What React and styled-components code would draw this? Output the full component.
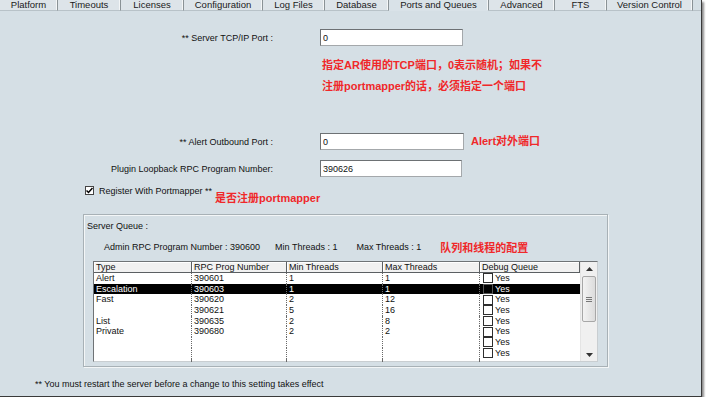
import React from "react";
import styled, { createGlobalStyle } from "styled-components";

const tabs = [
  { label: "Platform", width: 58 },
  { label: "Timeouts", width: 63 },
  { label: "Licenses", width: 63 },
  { label: "Configuration", width: 79 },
  { label: "Log Files", width: 62 },
  { label: "Database", width: 64 },
  { label: "Ports and Queues", width: 100, active: true },
  { label: "Advanced", width: 66 },
  { label: "FTS", width: 52 },
  { label: "Version Control", width: 86 },
];

const queues = [
  ["Alert", "390601", "1", "1"],
  ["Escalation", "390603", "1", "1"],
  ["Fast", "390620", "2", "12"],
  ["", "390621", "5", "16"],
  ["List", "390635", "2", "8"],
  ["Private", "390680", "2", "2"],
  null,
  null,
];

function App() {
  return (
    <>
      <GlobalStyle />
      <Frame>
        <TabBar>
          {tabs.map((t) => (
            <Tab key={t.label} $width={t.width} $active={t.active}>
              {t.label}
            </Tab>
          ))}
          <TabRest />
        </TabBar>

        <Form>
          <FieldRow $top={18}>
            <Label>** Server TCP/IP Port :</Label>
            <TextInput $width={143} defaultValue="0" />
          </FieldRow>
          <NoteBlock>
            <Note>指定AR使用的TCP端口，0表示随机；如果不</Note>
            <Note>注册portmapper的话，必须指定一个端口</Note>
          </NoteBlock>
          <FieldRow $top={36}>
            <Label>** Alert Outbound Port :</Label>
            <TextInput $width={144} defaultValue="0" />
            <Note $inline>Alert对外端口</Note>
          </FieldRow>
          <FieldRow $top={10}>
            <Label>Plugin Loopback RPC Program Number:</Label>
            <TextInput $width={142} defaultValue="390626" />
          </FieldRow>
          <CheckRow>
            <CheckBox $checked>
              <svg width="7" height="7" viewBox="0 0 7 7">
                <path d="M0.5 3.5 L2.5 5.5 L6.5 1" stroke="#000" strokeWidth="1.5" fill="none" />
              </svg>
            </CheckBox>
            <CheckLabel>Register With Portmapper **</CheckLabel>
            <Note $inline>是否注册portmapper</Note>
          </CheckRow>
        </Form>

        <GroupBox>
          <GroupTitle>Server Queue :</GroupTitle>
          <StatsRow>
            <Stat>Admin RPC Program Number : 390600</Stat>
            <Stat>Min Threads : 1</Stat>
            <Stat>Max Threads : 1</Stat>
            <Note $inline>队列和线程的配置</Note>
          </StatsRow>
          <List>
            <ListMain>
              <HeaderRow>
                <HeaderCell>Type</HeaderCell>
                <HeaderCell>RPC Prog Number</HeaderCell>
                <HeaderCell>Min Threads</HeaderCell>
                <HeaderCell>Max Threads</HeaderCell>
                <HeaderCell>Debug Queue</HeaderCell>
              </HeaderRow>
              <ListBody>
                {queues.map((q, i) => (
                  <Row key={i} $selected={i === 1}>
                    <Cell>{q ? q[0] : ""}</Cell>
                    <Cell>{q ? q[1] : ""}</Cell>
                    <Cell>{q ? q[2] : ""}</Cell>
                    <Cell>{q ? q[3] : ""}</Cell>
                    <Cell $last>
                      <SmallBox $selected={i === 1} />
                      Yes
                    </Cell>
                  </Row>
                ))}
                <Row $filler>
                  <Cell />
                  <Cell />
                  <Cell />
                  <Cell />
                  <Cell $last />
                </Row>
              </ListBody>
            </ListMain>
            <ScrollBar>
              <ScrollArrow>
                <svg width="7" height="4" viewBox="0 0 7 4">
                  <path d="M0 4 L3.5 0 L7 4 Z" fill="#333" />
                </svg>
              </ScrollArrow>
              <Thumb>
                <Grip />
                <Grip />
                <Grip />
              </Thumb>
              <ScrollTrack />
              <ScrollArrow>
                <svg width="7" height="4" viewBox="0 0 7 4">
                  <path d="M0 0 L3.5 4 L7 0 Z" fill="#333" />
                </svg>
              </ScrollArrow>
            </ScrollBar>
          </List>
        </GroupBox>

        <Footer>** You must restart the server before a change to this setting takes effect</Footer>
      </Frame>
    </>
  );
}

export default App;

const GlobalStyle = createGlobalStyle`
  html, body {
    margin: 0;
    padding: 0;
    background: #ffffff;
  }
  body {
    font-family: "Liberation Sans", Arial, sans-serif;
    font-size: 9px;
    color: #111;
  }
`;

const Frame = styled.div`
  width: 702px;
  height: 397px;
  box-sizing: border-box;
  background: #d5dfe5;
  border-right: 1px solid #3a3a3a;
  border-bottom: 1px solid #3a3a3a;
  box-shadow: 2px 2px 2px rgba(0, 0, 0, 0.45);
  display: flex;
  flex-direction: column;
  overflow: hidden;
`;

const TabBar = styled.div`
  display: flex;
  height: 11px;
  flex-shrink: 0;
`;

const Tab = styled.div`
  width: ${(p) => p.$width}px;
  box-sizing: border-box;
  text-align: center;
  line-height: 9px;
  font-size: 9.5px;
  background: ${(p) => (p.$active ? "#d9e2e8" : "#dde4e9")};
  border-right: 1px solid #8a9296;
  border-bottom: ${(p) => (p.$active ? "1px solid transparent" : "1px solid #b8c2c8")};
  box-shadow: inset -1px 0 0 #f4f6f7;
  color: #1a1a1a;
`;

const TabRest = styled.div`
  flex: 1;
  border-bottom: 1px solid #b8c2c8;
`;

const Form = styled.div`
  display: flex;
  flex-direction: column;
`;

const FieldRow = styled.div`
  display: grid;
  grid-template-columns: 273px auto auto;
  column-gap: 47px;
  align-items: center;
  justify-content: start;
  margin-top: ${(p) => p.$top}px;
  height: 17px;
  & > :nth-child(3) {
    margin-left: -40px;
  }
`;

const Label = styled.div`
  text-align: right;
  white-space: nowrap;
`;

const TextInput = styled.input`
  width: ${(p) => p.$width}px;
  height: 17px;
  box-sizing: border-box;
  border: 1px solid #a4a8ab;
  border-top-color: #6d7174;
  border-left-color: #6d7174;
  background: #fff;
  font-family: "Liberation Sans", Arial, sans-serif;
  font-size: 9px;
  padding: 1px 2px 0;
  color: #111;
  outline: none;
`;

const NoteBlock = styled.div`
  margin: 9px 0 0 322px;
  display: flex;
  flex-direction: column;
`;

const Note = styled.div`
  font-family: "Liberation Sans", "Noto Sans CJK SC", sans-serif;
  font-weight: bold;
  font-size: 11px;
  line-height: ${(p) => (p.$inline ? "13px" : "21px")};
  color: #f0282a;
  white-space: nowrap;
`;

const CheckRow = styled.div`
  display: flex;
  align-items: flex-start;
  margin: 9px 0 0 85px;
  height: 18px;
  & > :last-child {
    margin: 6px 0 0 3px;
  }
`;

const CheckBox = styled.div`
  width: 9px;
  height: 9px;
  box-sizing: border-box;
  border: 1px solid #444;
  background: #fff;
  display: flex;
  align-items: center;
  justify-content: center;
`;

const CheckLabel = styled.div`
  margin-left: 5px;
  line-height: 10px;
`;

const GroupBox = styled.div`
  margin: 10px 0 0 83px;
  width: 525px;
  height: 153px;
  flex-shrink: 0;
  box-sizing: border-box;
  border: 1px solid #a8b1b6;
  box-shadow: inset 1px 1px 0 #f3f6f7, 1px 1px 0 #f3f6f7;
  padding: 5px 9px 6px 9px;
  display: flex;
  flex-direction: column;
`;

const GroupTitle = styled.div`
  margin-left: -6px;
  line-height: 12px;
`;

const StatsRow = styled.div`
  display: flex;
  align-items: center;
  margin: 8px 0 0 11px;
  height: 13px;
  & > :nth-child(2) {
    margin-left: 15px;
  }
  & > :nth-child(3) {
    margin-left: 19px;
  }
  & > :nth-child(4) {
    margin: 3px 0 0 19px;
  }
`;

const Stat = styled.div`
  white-space: nowrap;
`;

const List = styled.div`
  margin-top: 8px;
  height: 101px;
  flex-shrink: 0;
  box-sizing: border-box;
  border: 1px solid #6f7376;
  border-right-color: #c9ced1;
  border-bottom-color: #c9ced1;
  background: #fff;
  display: flex;
`;

const ListMain = styled.div`
  flex: 1;
  display: flex;
  flex-direction: column;
`;

const columns = "98px 95px 96px 97px 1fr";

const HeaderRow = styled.div`
  display: grid;
  grid-template-columns: ${columns};
  height: 11px;
  flex-shrink: 0;
`;

const HeaderCell = styled.div`
  box-sizing: border-box;
  background: #f1f1f1;
  border-right: 1px solid #5b5f62;
  border-bottom: 1px solid #5b5f62;
  box-shadow: inset 1px 1px 0 #fff;
  padding-left: 2px;
  line-height: 11px;
  overflow: hidden;
  white-space: nowrap;
`;

const ListBody = styled.div`
  flex: 1;
  display: flex;
  flex-direction: column;
`;

const Row = styled.div`
  display: grid;
  grid-template-columns: ${columns};
  height: ${(p) => (p.$filler ? "auto" : "10.7px")};
  flex: ${(p) => (p.$filler ? 1 : "none")};
  background: ${(p) => (p.$selected ? "#000" : "transparent")};
  color: ${(p) => (p.$selected ? "#fff" : "#111")};
`;

const Cell = styled.div`
  box-sizing: border-box;
  border-right: ${(p) => (p.$last ? "none" : "1px dotted #6a6a6a")};
  padding-left: ${(p) => (p.$last ? "3px" : "2px")};
  line-height: 10.7px;
  display: flex;
  align-items: center;
  white-space: nowrap;
  overflow: hidden;
`;

const SmallBox = styled.span`
  width: 10px;
  height: 10px;
  box-sizing: border-box;
  border: 1px solid ${(p) => (p.$selected ? "#555" : "#2e2e2e")};
  background: ${(p) => (p.$selected ? "#000" : "#fff")};
  margin-right: 2px;
  flex-shrink: 0;
`;

const ScrollBar = styled.div`
  width: 16px;
  display: flex;
  flex-direction: column;
  background: #f0f0f0;
  border-left: 1px solid #e4e4e4;
`;

const ScrollArrow = styled.div`
  height: 13px;
  display: flex;
  align-items: center;
  justify-content: center;
  flex-shrink: 0;
`;

const Thumb = styled.div`
  height: 46px;
  margin: 1px 1px 0;
  box-sizing: border-box;
  border: 1px solid #a7a7a7;
  border-radius: 2px;
  background: linear-gradient(to right, #f3f3f3, #dcdcdc);
  display: flex;
  flex-direction: column;
  align-items: center;
  justify-content: center;
  gap: 1px;
`;

const Grip = styled.span`
  width: 6px;
  height: 1px;
  background: #777;
`;

const ScrollTrack = styled.div`
  flex: 1;
`;

const Footer = styled.div`
  margin: 12px 0 0 35px;
  line-height: 11px;
`;
